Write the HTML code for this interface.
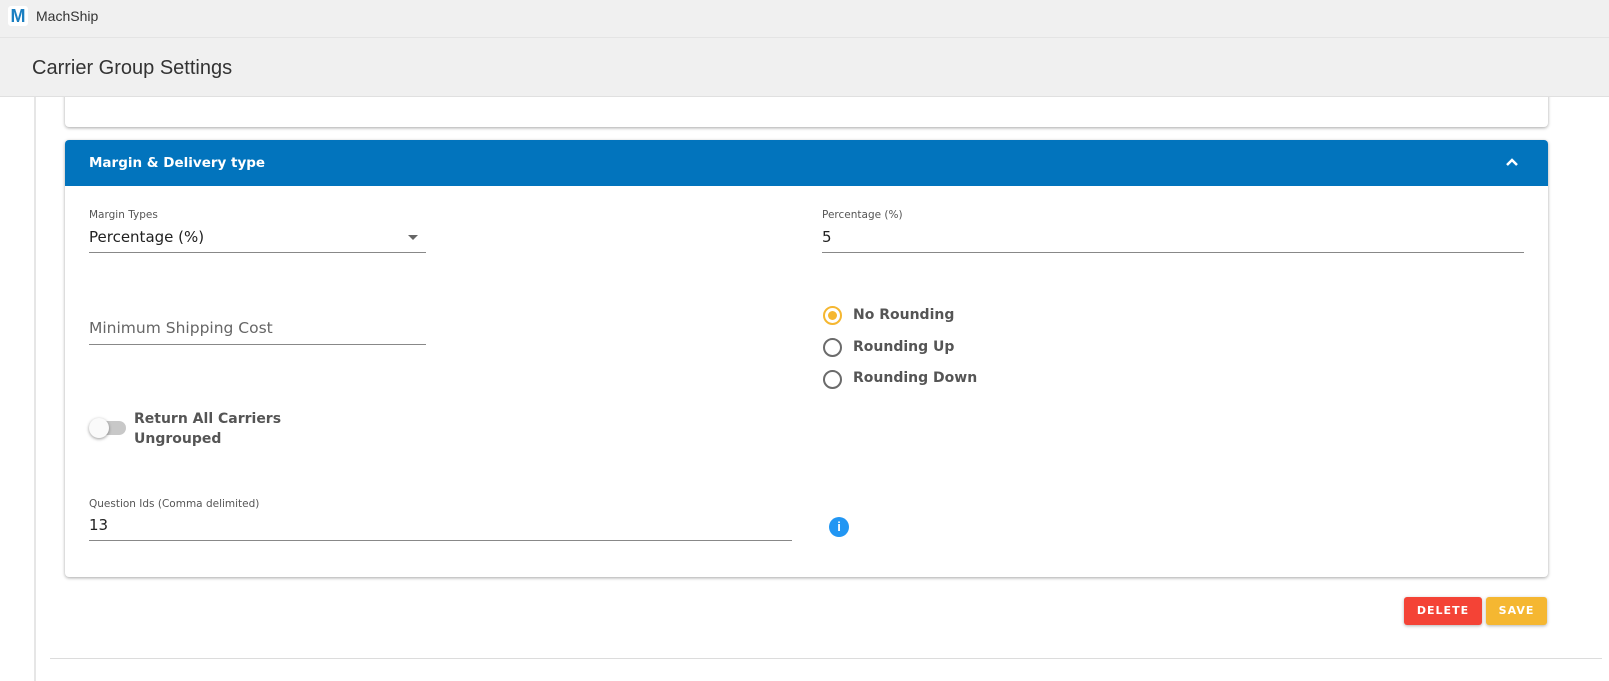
<!DOCTYPE html>
<html><head><style>
*{box-sizing:border-box;margin:0;padding:0}
body{width:1609px;height:681px;overflow:hidden;background:#fff;font-family:"Liberation Sans",sans-serif;position:relative;color:#333}
.abs{position:absolute}
.d{font-family:"DejaVu Sans",sans-serif}
.top{left:0;top:0;width:1609px;height:38px;background:#f0f0f0;border-bottom:1px solid #e4e4e4}
.hdr{left:0;top:38px;width:1609px;height:59px;background:#f0f0f0;border-bottom:1px solid #e0e0e0}
.card{background:#fff;border-radius:4px;box-shadow:0 1px 3px rgba(0,0,0,.35)}
.lbl{font-size:10.5px;color:#555;font-family:"DejaVu Sans",sans-serif}
.val{font-size:15px;color:#222;font-family:"DejaVu Sans",sans-serif}
.line{height:1px;background:#888}
.rad{width:19px;height:19px;border-radius:50%;border:2px solid #6b6b6b}
.rt{font-size:14px;color:#555;font-weight:bold;font-family:"DejaVu Sans",sans-serif}
.btn{color:#fff;font-size:11px;font-weight:bold;letter-spacing:1px;border-radius:3px;text-align:center;line-height:28px;box-shadow:0 1px 3px rgba(0,0,0,.3);font-family:"DejaVu Sans",sans-serif}
</style></head><body>
<div class="abs" style="left:34px;top:97px;width:2px;height:584px;background:#e6e6e6"></div>
<div class="abs" style="left:50px;top:658px;width:1552px;height:1px;background:#dcdcdc"></div>
<div class="abs card" style="left:65px;top:80px;width:1483px;height:47px"></div>
<div class="abs top"></div>
<div class="abs" style="left:8px;top:6px;width:20px;height:20px;background:#fff;border-radius:3px;color:#1a7fc1;font-weight:bold;font-size:18px;line-height:21px;text-align:center">M</div>
<div class="abs" style="left:36px;top:8px;font-size:14px;color:#333">MachShip</div>
<div class="abs hdr"></div>
<div class="abs" style="left:32px;top:57px;font-size:20px;color:#333">Carrier Group Settings</div>

<div class="abs card" style="left:65px;top:140px;width:1483px;height:437px;overflow:hidden">
 <div class="d" style="height:46px;background:#0274bd;color:#fff;font-weight:bold;font-size:13.5px;padding:15px 0 0 24px">Margin &amp; Delivery type</div>
 <svg class="abs" style="left:1440px;top:17px" width="14" height="10"><path d="M2 8 L7 3 L12 8" stroke="#fff" stroke-width="2.5" fill="none"/></svg>
</div>
<div class="abs lbl" style="left:89px;top:209px">Margin Types</div>
<div class="abs val" style="left:89px;top:228px">Percentage (%)</div>
<div class="abs" style="left:408px;top:235px;width:0;height:0;border-left:5px solid transparent;border-right:5px solid transparent;border-top:5px solid #666"></div>
<div class="abs line" style="left:89px;top:252px;width:337px"></div>
<div class="abs lbl" style="left:822px;top:209px">Percentage (%)</div>
<div class="abs val" style="left:822px;top:228px">5</div>
<div class="abs line" style="left:822px;top:252px;width:702px"></div>
<div class="abs d" style="left:89px;top:319px;font-size:15.5px;color:#666">Minimum Shipping Cost</div>
<div class="abs line" style="left:89px;top:344px;width:337px"></div>
<div class="abs rad" style="left:823px;top:306px;border-color:#f5b731"><div style="width:9px;height:9px;border-radius:50%;background:#f5b731;margin:3px"></div></div>
<div class="abs rt" style="left:853px;top:307px">No Rounding</div>
<div class="abs rad" style="left:823px;top:338px"></div>
<div class="abs rt" style="left:853px;top:339px">Rounding Up</div>
<div class="abs rad" style="left:823px;top:370px"></div>
<div class="abs rt" style="left:853px;top:370px">Rounding Down</div>
<div class="abs" style="left:93px;top:421px;width:33px;height:14px;border-radius:7px;background:#c8c8c8"></div>
<div class="abs" style="left:89px;top:418px;width:20px;height:20px;border-radius:50%;background:#fafafa;box-shadow:0 1px 3px rgba(0,0,0,.4)"></div>
<div class="abs rt" style="left:134px;top:409px;line-height:20px">Return All Carriers<br>Ungrouped</div>
<div class="abs lbl" style="left:89px;top:498px">Question Ids (Comma delimited)</div>
<div class="abs val" style="left:89px;top:516px">13</div>
<div class="abs line" style="left:89px;top:540px;width:703px"></div>
<div class="abs" style="left:829px;top:517px;width:20px;height:20px;border-radius:50%;background:#2196f3;color:#fff;font-weight:bold;font-size:13px;text-align:center;line-height:20px">i</div>
<div class="abs btn" style="left:1404px;top:597px;width:78px;background:#f44336">DELETE</div>
<div class="abs btn" style="left:1486px;top:597px;width:61px;background:#f5b731">SAVE</div>
</body></html>
